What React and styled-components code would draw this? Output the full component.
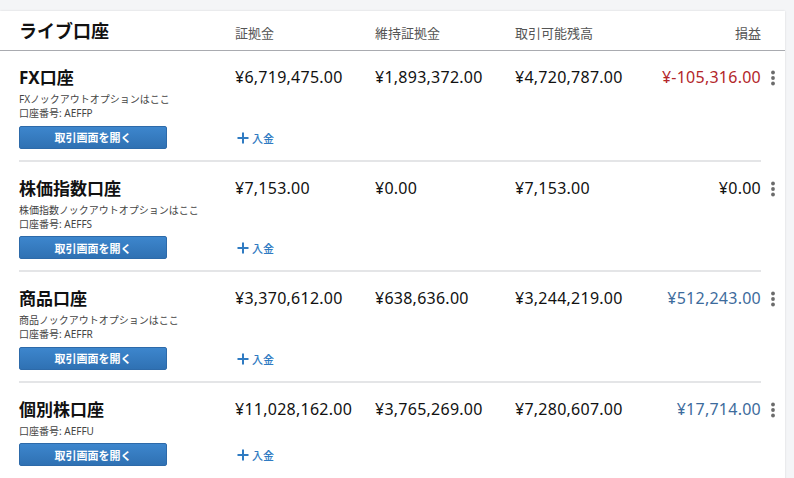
import React from 'react'
import styled, { createGlobalStyle } from 'styled-components'

const GlobalStyle = createGlobalStyle`
  html, body {
    margin: 0;
    padding: 0;
    background: #f4f5f7;
    font-family: 'Noto Sans', 'Noto Sans CJK JP', sans-serif;
    color: #111;
  }
`

const Page = styled.div`
  padding: 11px 9px 0 0;
  height: 478px;
  box-sizing: border-box;
  overflow: hidden;
`

const Card = styled.section`
  background: #fff;
  width: 785px;
  min-height: 480px;
  box-shadow: 0 0 2px rgba(0, 0, 0, 0.12);
`

const cols = '216px 140px 140px 140px 1fr'

const Header = styled.div`
  display: grid;
  grid-template-columns: ${cols};
  align-items: center;
  height: 39px;
  padding: 0 24px 0 19px;
  border-bottom: 1px solid #a9abb0;
`

const Title = styled.h1`
  margin: 0;
  font-size: 18px;
  font-weight: 700;
  line-height: 24px;
`

const HeadLabel = styled.span`
  font-size: 13px;
  color: #555;
  padding-top: 4px;
  text-align: ${({ $right }) => ($right ? 'right' : 'left')};
`

const Row = styled.div`
  display: grid;
  grid-template-columns: ${cols};
  grid-template-rows: auto auto;
  margin: 0 24px 0 19px;
  padding: 16px 0 11px;
  border-bottom: ${({ $last }) => ($last ? 'none' : '2px solid #e4e5e7')};
`

const Info = styled.div`
  display: flex;
  flex-direction: column;
`

const Name = styled.h2`
  margin: 0 0 3px;
  font-size: 17px;
  font-weight: 700;
  line-height: 22px;
`

const Small = styled.span`
  font-size: 10px;
  line-height: 14px;
  color: #444;
`

const Value = styled.span`
  font-size: 16px;
  line-height: 22px;
  letter-spacing: 0.25px;
  margin-top: -1px;
  white-space: nowrap;
  color: ${({ $tone }) =>
    $tone === 'loss' ? '#b3262a' : $tone === 'gain' ? '#3d6b9c' : '#111'};
`

const ProfitCell = styled.div`
  display: flex;
  justify-content: flex-end;
  align-items: flex-start;
`

const Kebab = styled.button`
  border: 0;
  background: none;
  padding: 0;
  width: 24px;
  height: 22px;
  margin-right: -24px;
  display: flex;
  justify-content: center;
  align-items: center;
  cursor: pointer;
`

const Actions = styled.div`
  grid-column: 1;
  padding-top: 5px;
`

const TradeButton = styled.button`
  width: 148px;
  height: 23px;
  border: 1px solid #2d6aa9;
  border-radius: 2px;
  background: linear-gradient(#3d86cd, #2f71b3);
  color: #fff;
  font-family: inherit;
  font-size: 11px;
  font-weight: 700;
  cursor: pointer;
`

const Deposit = styled.a`
  grid-column: 2;
  align-self: end;
  display: flex;
  align-items: center;
  gap: 3px;
  margin: 0 0 3px 2px;
  font-size: 11px;
  font-weight: 500;
  color: #2f7bc2;
  cursor: pointer;
`

const Dots = () => (
  <svg width="6" height="16" viewBox="0 0 6 16">
    <circle cx="3" cy="2.5" r="1.9" fill="#6b6b6b" />
    <circle cx="3" cy="8" r="1.9" fill="#6b6b6b" />
    <circle cx="3" cy="13.5" r="1.9" fill="#6b6b6b" />
  </svg>
)

const Plus = () => (
  <svg width="12" height="12" viewBox="0 0 12 12">
    <path d="M6 0.5v11M0.5 6h11" stroke="#2f7bc2" strokeWidth="2" />
  </svg>
)

const accounts = [
  {
    name: 'FX口座',
    sub: 'FXノックアウトオプションはここ',
    id: 'AEFFP',
    values: ['¥6,719,475.00', '¥1,893,372.00', '¥4,720,787.00'],
    pl: '¥-105,316.00',
    tone: 'loss',
  },
  {
    name: '株価指数口座',
    sub: '株価指数ノックアウトオプションはここ',
    id: 'AEFFS',
    values: ['¥7,153.00', '¥0.00', '¥7,153.00'],
    pl: '¥0.00',
    tone: 'flat',
  },
  {
    name: '商品口座',
    sub: '商品ノックアウトオプションはここ',
    id: 'AEFFR',
    values: ['¥3,370,612.00', '¥638,636.00', '¥3,244,219.00'],
    pl: '¥512,243.00',
    tone: 'gain',
  },
  {
    name: '個別株口座',
    id: 'AEFFU',
    values: ['¥11,028,162.00', '¥3,765,269.00', '¥7,280,607.00'],
    pl: '¥17,714.00',
    tone: 'gain',
  },
]

export default function App() {
  return (
    <Page>
      <GlobalStyle />
      <Card>
        <Header>
          <Title>ライブ口座</Title>
          <HeadLabel>証拠金</HeadLabel>
          <HeadLabel>維持証拠金</HeadLabel>
          <HeadLabel>取引可能残高</HeadLabel>
          <HeadLabel $right>損益</HeadLabel>
        </Header>
        {accounts.map((a, i) => (
          <Row key={a.id} $last={i === accounts.length - 1}>
            <Info>
              <Name>{a.name}</Name>
              {a.sub && <Small>{a.sub}</Small>}
              <Small>口座番号: {a.id}</Small>
            </Info>
            {a.values.map((v) => (
              <Value key={v}>{v}</Value>
            ))}
            <ProfitCell>
              <Value $tone={a.tone}>{a.pl}</Value>
              <Kebab aria-label="メニュー">
                <Dots />
              </Kebab>
            </ProfitCell>
            <Actions>
              <TradeButton>取引画面を開く</TradeButton>
            </Actions>
            <Deposit>
              <Plus />
              入金
            </Deposit>
          </Row>
        ))}
      </Card>
    </Page>
  )
}
